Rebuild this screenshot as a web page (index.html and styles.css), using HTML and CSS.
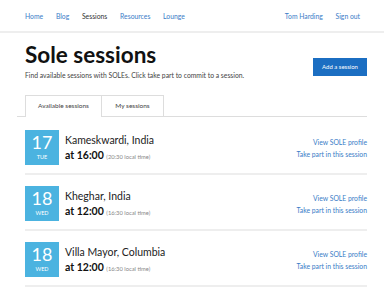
FILE: index.html
```html
<!DOCTYPE html>
<html lang="en">
<head>
    <meta charset="UTF-8">
    <title>Sole sessions</title>
    <link rel="stylesheet" href="styles.css">
</head>
<body>
    <!--Barra de navegação-->
    <nav class="topnav">
        <div class="nav-left">
            <a href="#">Home</a>
            <a href="#">Blog</a>
            <a href="#" class="current">Sessions</a>
            <a href="#">Resources</a>
            <a href="#">Lounge</a>
        </div>
        <div class="nav-right">
            <a href="#">Tom Harding</a>
            <a href="#">Sign out</a>
        </div>
    </nav>

    <div class="page">
        <div class="page-head">
            <div>
                <h1>Sole sessions</h1>
                <p class="intro">Find available sessions with SOLEs. Click take part to commit to a session.</p>
            </div>
            <a href="#" class="btn-add">Add a session</a>
        </div>

        <div class="tabs">
            <span class="tab active">Available sessions</span>
            <span class="tab">My sessions</span>
        </div>

        <ul class="sessions">
            <li class="session">
                <div class="date"><span class="day">17</span><span class="dow">TUE</span></div>
                <div class="info">
                    <div class="place">Kameskwardi, India</div>
                    <div class="time">at 16:00 <small>(20:30 local time)</small></div>
                </div>
                <div class="links">
                    <a href="#">View SOLE profile</a>
                    <a href="#">Take part in this session</a>
                </div>
            </li>
            <li class="session">
                <div class="date"><span class="day">18</span><span class="dow">WED</span></div>
                <div class="info">
                    <div class="place">Kheghar, India</div>
                    <div class="time">at 12:00 <small>(16:30 local time)</small></div>
                </div>
                <div class="links">
                    <a href="#">View SOLE profile</a>
                    <a href="#">Take part in this session</a>
                </div>
            </li>
            <li class="session">
                <div class="date"><span class="day">18</span><span class="dow">WED</span></div>
                <div class="info">
                    <div class="place">Villa Mayor, Columbia</div>
                    <div class="time">at 12:00 <small>(16:30 local time)</small></div>
                </div>
                <div class="links">
                    <a href="#">View SOLE profile</a>
                    <a href="#">Take part in this session</a>
                </div>
            </li>
        </ul>
    </div>
</body>
</html>
```

FILE: styles.css
```css
body {
    margin: 0;
    font-family: Lato, "Open Sans", sans-serif;
    color: #222;
    background: #fff;
}
a {
    color: #3a7cc7;
    text-decoration: none;
}
.topnav {
    display: flex;
    justify-content: space-between;
    align-items: center;
    height: 31px;
    padding: 0 24px 0 25px;
    border-bottom: 2px solid #eee;
    font-size: 6.8px;
}
.topnav a {
    margin-right: 11px;
}
.nav-right a:last-child {
    margin-right: 0;
}
.topnav a.current {
    color: #333;
}
.page {
    padding: 0 17px 0 25px;
}
.page-head {
    display: flex;
    justify-content: space-between;
    align-items: flex-start;
}
h1 {
    margin: 6px 0 0;
    font-size: 22.5px;
    font-weight: 700;
    line-height: 32px;
    color: #111;
}
.intro {
    margin: 0;
    font-size: 6.8px;
    color: #444;
}
.btn-add {
    margin-top: 25px;
    width: 54px;
    height: 18px;
    line-height: 18px;
    text-align: center;
    font-size: 6px;
    color: #fff;
    background-color: #1b6ec2;
}
.tabs {
    display: flex;
    margin: 16px 0 0 -8px;
    padding-left: 8px;
    border-bottom: 1px solid #ddd;
}
.tab {
    height: 20px;
    line-height: 20px;
    text-align: center;
    font-size: 6.5px;
    color: #444;
    border: 1px solid #ddd;
    border-bottom: none;
}
.tab.active {
    width: 75px;
    background: #fff;
    margin-bottom: -1px;
    height: 21px;
}
.tab + .tab {
    width: 61px;
    border-left: none;
}
.sessions {
    list-style: none;
    margin: 13px 0 0;
    padding: 0;
}
.session {
    display: flex;
    align-items: flex-start;
    height: 43px;
    margin-bottom: 11px;
    border-bottom: 2px solid #eee;
}
.date {
    display: flex;
    flex-direction: column;
    align-items: center;
    width: 34px;
    height: 35px;
    background-color: #4bb3e0;
    color: #fff;
}
.day {
    font-size: 18px;
    line-height: 22px;
    margin-top: 1px;
}
.dow {
    font-size: 5.5px;
    line-height: 8px;
}
.info {
    flex: 1;
    padding: 3px 0 0 6px;
}
.place {
    font-size: 10.5px;
    line-height: 15px;
    color: #222;
}
.time {
    font-size: 10.5px;
    font-weight: 700;
    line-height: 15px;
    color: #111;
}
.time small {
    font-size: 5.8px;
    font-weight: 400;
    color: #888;
}
.links {
    display: flex;
    flex-direction: column;
    align-items: flex-end;
    padding-top: 6px;
    font-size: 6.8px;
    line-height: 12px;
}
```
